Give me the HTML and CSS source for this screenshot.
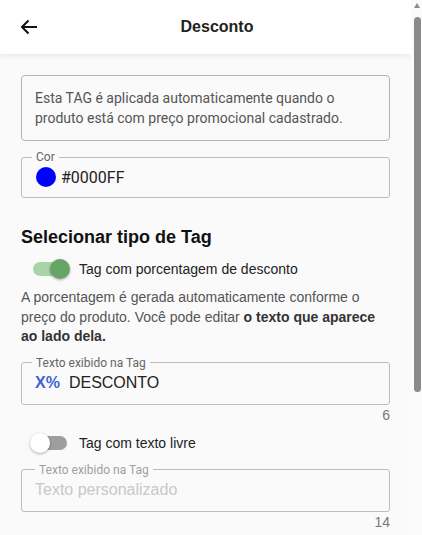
FILE: index.html
```html
<!DOCTYPE html>
<html>
<head>
  <meta charset="UTF-8">
  <title>Desconto</title>
  <link rel="stylesheet" href="styles.css">
</head>
<body>
  <div class="app">
    <header class="topbar">
      <button class="back" aria-label="Voltar">
        <svg width="18" height="16" viewBox="0 0 18 16">
          <path d="M17 8H2M8.5 1.5L2 8l6.5 6.5" fill="none" stroke="#111" stroke-width="2"/>
        </svg>
      </button>
      <h1 class="title">Desconto</h1>
    </header>

    <main class="content">
      <div class="info">
        Esta TAG é aplicada automaticamente quando o produto está com preço promocional cadastrado.
      </div>

      <fieldset class="field">
        <legend>Cor</legend>
        <div class="field-row">
          <span class="swatch"></span>
          <span class="value">#0000FF</span>
        </div>
      </fieldset>

      <h2 class="section">Selecionar tipo de Tag</h2>

      <label class="toggle">
        <span class="switch on"><span class="track"></span><span class="thumb"></span></span>
        <span class="toggle-text">Tag com porcentagem de desconto</span>
      </label>

      <p class="hint">A porcentagem é gerada automaticamente conforme o preço do produto. Você pode editar <b>o texto que aparece ao lado dela.</b></p>

      <fieldset class="field tall">
        <legend>Texto exibido na Tag</legend>
        <div class="field-row">
          <span class="pct">X%</span>
          <span class="value plain">DESCONTO</span>
        </div>
      </fieldset>
      <div class="counter">6</div>

      <label class="toggle second">
        <span class="switch"><span class="track"></span><span class="thumb"></span></span>
        <span class="toggle-text">Tag com texto livre</span>
      </label>

      <fieldset class="field tall disabled">
        <legend>Texto exibido na Tag</legend>
        <div class="field-row">
          <span class="placeholder">Texto personalizado</span>
        </div>
      </fieldset>
      <div class="counter">14</div>
    </main>
  </div>

  <div class="scrollbar">
    <span class="scroll-up"></span>
    <span class="scroll-thumb"></span>
  </div>
</body>
</html>
```

FILE: styles.css
```css
body {
  margin: 0;
  height: 535px;
  overflow: hidden;
  display: flex;
  background: #fafafa;
  font-family: "Liberation Sans", Arial, sans-serif;
  color: #222;
}
.app {
  flex: 1;
  min-width: 0;
}
.scrollbar {
  width: 11px;
  display: flex;
  flex-direction: column;
  align-items: center;
  padding-top: 3px;
  background: #fbfbfb;
}
.scroll-up {
  width: 0;
  height: 0;
  border-left: 3.5px solid transparent;
  border-right: 3.5px solid transparent;
  border-bottom: 5px solid #8a8a8a;
  margin-left: 1px;
}
.scroll-thumb {
  width: 7px;
  height: 375px;
  margin: 9px 0 0 1px;
  border-radius: 4px;
  background: #8a8a8a;
}
.topbar {
  display: flex;
  align-items: center;
  height: 54px;
  background: #fff;
  box-shadow: 0 2px 6px rgba(0, 0, 0, 0.07);
}
.back {
  width: 58px;
  height: 54px;
  border: none;
  background: none;
  padding: 0 0 0 20px;
  display: flex;
  align-items: center;
  cursor: pointer;
}
.title {
  flex: 1;
  margin: 0;
  padding-right: 35px;
  text-align: center;
  font-size: 16px;
  font-weight: bold;
  color: #222;
}
.content {
  padding: 21px 21px 0;
}
.info {
  border: 1px solid #b3b3b3;
  border-radius: 4px;
  padding: 12px 13px;
  font-family: Roboto, sans-serif;
  font-size: 14px;
  line-height: 20px;
  color: #555;
}
.field {
  margin: 9px 0 0;
  padding: 0 13px 7px 10px;
  border: 1px solid #bdbdbd;
  border-radius: 3px;
  min-width: 0;
}
.field legend {
  padding: 0 4px;
  font-family: Roboto, sans-serif;
  font-size: 12px;
  line-height: 14px;
  color: #666;
}
.field-row {
  display: flex;
  align-items: center;
  height: 26px;
  padding-left: 4px;
}
.field.tall .field-row {
  height: 27px;
  padding-left: 3px;
}
.swatch {
  width: 20px;
  height: 20px;
  border-radius: 50%;
  background: #0000ff;
  margin-right: 5px;
}
.value {
  font-family: Roboto, sans-serif;
  font-size: 16px;
  color: #222;
}
.value.plain {
  font-family: "Liberation Sans", Arial, sans-serif;
}
.pct {
  font-weight: bold;
  font-size: 16px;
  color: #3f63d3;
  margin-right: 9px;
}
.placeholder {
  font-size: 16px;
  color: #c8c8c8;
}
.field.disabled legend {
  color: #a0a0a0;
  margin-left: 3px;
}
.section {
  margin: 29px 0 0;
  font-size: 18px;
  font-weight: bold;
  color: #111;
}
.toggle {
  display: flex;
  align-items: center;
  gap: 9px;
  margin: 11px 0 0 9px;
  font-size: 14px;
}
.switch {
  position: relative;
  width: 40px;
  height: 20px;
}
.track {
  position: absolute;
  left: 3px;
  right: 3px;
  top: 3px;
  height: 14px;
  border-radius: 7px;
  background: #9e9e9e;
}
.thumb {
  position: absolute;
  left: 0;
  top: 0;
  width: 20px;
  height: 20px;
  border-radius: 50%;
  background: #fff;
  box-shadow: 0 1px 3px rgba(0, 0, 0, 0.3);
}
.switch.on .track {
  background: #a9d3a9;
}
.switch.on .thumb {
  left: 20px;
  background: #67a567;
}
.toggle-text {
  color: #222;
}
.hint {
  margin: 9px 0 0;
  font-size: 14px;
  line-height: 19.5px;
  color: #555;
}
.hint b {
  color: #333;
}
.counter {
  text-align: right;
  font-size: 14px;
  color: #777;
  padding: 2px 0 0 0;
}
.toggle.second {
  margin-top: 10px;
}
.second + .field {
  margin-top: 10px;
}
```
